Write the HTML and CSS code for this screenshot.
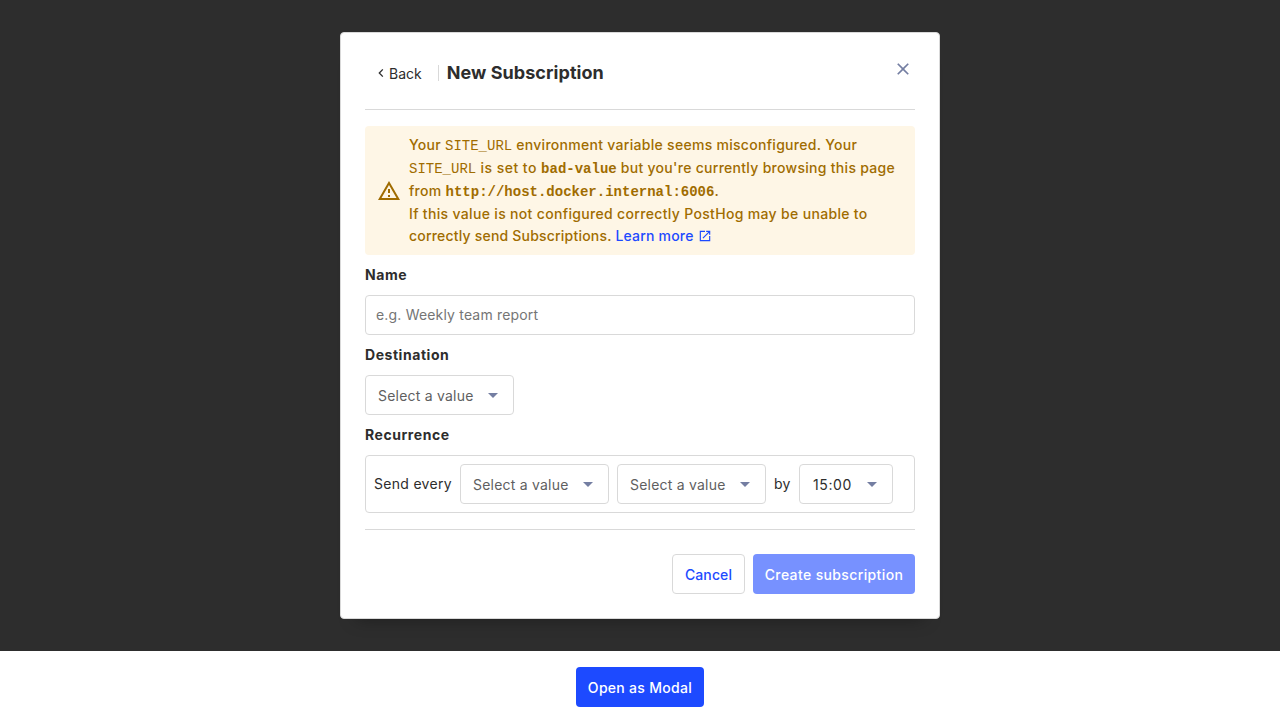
FILE: index.html
```html
<!DOCTYPE html>
<html lang="en">
<head>
<meta charset="utf-8">
<title>New Subscription</title>
<link rel="stylesheet" href="styles.css">
</head>
<body>
<main class="backdrop">
  <section class="modal">
    <header class="header">
      <button class="back"><svg class="back-icon" width="10" height="10" viewBox="0 0 10 10"><path d="M6.8 1.4 3.3 5l3.5 3.6" fill="none" stroke="currentColor" stroke-width="1.3"/></svg><span class="back-text">Back</span></button>
      <span class="separator"></span>
      <h1 class="title">New Subscription</h1>
      <button class="close" aria-label="Close"><svg width="20" height="20" viewBox="0 0 24 24"><path fill="currentColor" d="M19 6.41 17.59 5 12 10.59 6.41 5 5 6.41 10.59 12 5 17.59 6.41 19 12 13.41 17.59 19 19 17.59 13.41 12z"/></svg></button>
    </header>
    <div class="alert">
      <svg class="alert-icon" width="24" height="24" viewBox="0 0 24 24"><path fill="currentColor" d="M12 5.99 19.53 19H4.47L12 5.99M12 2 1 21h22L12 2zm1 14h-2v2h2v-2zm0-6h-2v4h2v-4z"/></svg>
      <div class="alert-text">Your <code>SITE_URL</code> environment variable seems misconfigured. Your <code>SITE_URL</code><span class="wide"> is set to </span><b><code>bad-value</code></b> but you're currently browsing this page from <b><code>http://host.docker.internal:6006</code></b>.<br><span class="advice">If this value is not configured correctly PostHog may be unable to</span> <span class="tight">correctly send Subscriptions. <a class="link" href="#">Learn more <svg class="link-icon" width="14" height="14" viewBox="0 0 24 24"><path fill="currentColor" d="M19 19H5V5h7V3H3v18h18v-9h-2v7zM14 3v2h3.59l-9.83 9.83 1.41 1.41L19 6.41V10h2V3h-7z"/></svg></a></span></div>
    </div>
    <label class="label" for="name">Name</label>
    <input class="input" id="name" placeholder="e.g. Weekly team report">
    <div class="label">Destination</div>
    <button class="select">Select a value<svg class="caret" width="24" height="24" viewBox="0 0 24 24"><path fill="currentColor" d="m7 10 5 5 5-5z"/></svg></button>
    <div class="label">Recurrence</div>
    <div class="recurrence">
      <span class="phrase">Send every</span>
      <button class="select">Select a value<svg class="caret" width="24" height="24" viewBox="0 0 24 24"><path fill="currentColor" d="m7 10 5 5 5-5z"/></svg></button>
      <button class="select">Select a value<svg class="caret" width="24" height="24" viewBox="0 0 24 24"><path fill="currentColor" d="m7 10 5 5 5-5z"/></svg></button>
      <span class="by">by</span>
      <button class="select time"><span>15:00</span><svg class="caret" width="24" height="24" viewBox="0 0 24 24"><path fill="currentColor" d="m7 10 5 5 5-5z"/></svg></button>
    </div>
    <footer class="footer">
      <button class="button outlined">Cancel</button>
      <button class="button disabled">Create subscription</button>
    </footer>
  </section>
</main>
<div class="launcher"><button class="button primary">Open as Modal</button></div>
</body>
</html>
```
FILE: styles.css
```css
* { box-sizing: border-box; }
body { margin: 0; overflow: hidden; background: #fff; color: #2d2d2d; font: 14px/22px Inter, sans-serif; }
button { font: inherit; color: inherit; background: none; border: 0; padding: 0; margin: 0; white-space: nowrap; }
svg { flex: none; }
.backdrop { height: 651px; padding-top: 32px; background: #2d2d2d; }
.modal { width: 600px; height: 587px; margin: 0 auto; padding: 24px; background: #fff; border: 1px solid #d9d9d9; border-radius: 4px; box-shadow: 0 16px 16px -16px rgba(0,0,0,.35); }
.header { display: flex; align-items: center; height: 53px; padding-bottom: 21px; border-bottom: 1px solid #d9d9d9; margin-bottom: 16px; }
.back { display: flex; align-items: center; padding-left: 11px; height: 32px; }
.back-icon { margin-right: 3px; }
.back-text { padding-top: 2px; }
.separator { width: 1px; height: 16px; background: #d9d9d9; margin: 0 8px 0 16px; }
.title { margin: 0; font-size: 18px; font-weight: 700; line-height: 24px; letter-spacing: .06px; }
.close { display: flex; margin: -8px 2px 0 auto; color: #747ea2; }
.alert { display: flex; align-items: center; gap: 8px; height: 129px; padding: 8px 12px; border-radius: 4px; background: #fef6e6; color: #a06c00; font-weight: 500; letter-spacing: .29px; }
code { font-family: "Liberation Mono", monospace; font-size: 14px; letter-spacing: 0; }
.alert-text { flex: 1; }
.wide { letter-spacing: .48px; }
.advice { letter-spacing: .33px; }
.tight { letter-spacing: .2px; }
.link { color: #1d4aff; text-decoration: none; }
.link-icon { vertical-align: -2px; }
.label { display: block; font-weight: 700; letter-spacing: .55px; margin: 9px 0; }
.input { display: block; width: 100%; height: 40px; padding: 0 10px 2px; font: inherit; letter-spacing: .18px; border: 1px solid #d9d9d9; border-radius: 4px; }
.input::placeholder { color: #757575; }
.select { display: flex; align-items: center; justify-content: space-between; flex: none; width: 149px; height: 40px; padding: 1px 8px 0 12px; border: 1px solid #d9d9d9; border-radius: 4px; color: #5f5f5f; letter-spacing: .22px; }
.caret { color: #747ea2; margin-top: -2px; }
.time { width: 94px; padding-left: 13px; color: #2d2d2d; letter-spacing: .6px; }
.recurrence { display: flex; align-items: center; gap: 8px; height: 58px; padding: 0 8px; border: 1px solid #d9d9d9; border-radius: 4px; }
.phrase { width: 78px; letter-spacing: .3px; white-space: nowrap; }
.by { width: 17px; letter-spacing: .3px; }
.footer { display: flex; justify-content: flex-end; gap: 8px; margin-top: 16px; padding-top: 24px; border-top: 1px solid #d9d9d9; }
.button { height: 40px; padding: 2px 0 0; border-radius: 4px; font-weight: 500; }
.outlined { width: 73px; border: 1px solid #d9d9d9; color: #1d4aff; letter-spacing: .1px; }
.disabled { width: 162px; background: #7791ff; color: #fff; letter-spacing: .37px; }
.primary { width: 128px; background: #1d4aff; color: #fff; letter-spacing: .3px; }
.launcher { display: flex; justify-content: center; padding-top: 16px; }
```
